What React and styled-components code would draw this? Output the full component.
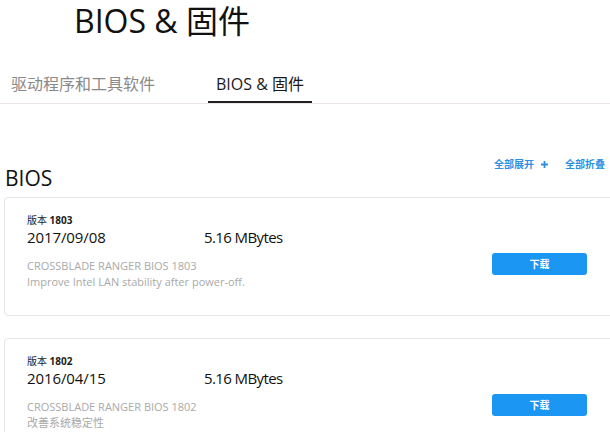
import React from "react";
import styled, { createGlobalStyle } from "styled-components";

const Global = createGlobalStyle`
  html, body { margin: 0; padding: 0; overflow: hidden; background: #fff; }
  body { font-family: "Open Sans", "Noto Sans CJK SC", sans-serif; color: #1a1a1a; }
`;

const Page = styled.div`
  width: 610px;
  height: 432px;
  overflow: hidden;
`;

const Title = styled.h1`
  margin: 0;
  padding-left: 74px;
  font-size: 32px;
  font-weight: 400;
  line-height: 42px;
  color: #111;
`;

const Tabs = styled.div`
  display: flex;
  gap: 45px;
  margin-top: 30px;
  padding-left: 3px;
  border-bottom: 1px solid #efe8ea;
`;

const Tab = styled.div`
  padding: 0 8px 5px;
  font-size: 16px;
  line-height: 24px;
  color: ${(p) => (p.$active ? "#1a1a1a" : "#8a8a8a")};
  border-bottom: 2px solid ${(p) => (p.$active ? "#222" : "transparent")};
`;

const Section = styled.div`
  width: 640px;
  margin-left: 4px;
`;

const SectionHead = styled.div`
  display: flex;
  justify-content: space-between;
  align-items: flex-start;
  margin-top: 53px;
  padding-right: 25px;
`;

const Heading = styled.h2`
  margin: 8px 0 0 1px;
  font-size: 21px;
  font-weight: 400;
  line-height: 26px;
  color: #111;
`;

const Actions = styled.div`
  display: flex;
  gap: 17px;
`;

const Action = styled.span`
  display: inline-flex;
  align-items: center;
  gap: 7px;
  font-size: 10px;
  font-weight: 700;
  line-height: 14px;
  color: #2b90e4;
`;

const Cards = styled.div`
  display: flex;
  flex-direction: column;
  gap: 22px;
  margin-top: 6px;
`;

const Card = styled.div`
  display: flex;
  align-items: flex-start;
  height: 117px;
  border: 1px solid #e6e6e6;
  border-radius: 4px;
  padding-left: 22px;
`;

const Info = styled.div`
  flex: 1;
  padding-top: 15px;
`;

const Version = styled.div`
  font-size: 10px;
  line-height: 14px;
  color: #222;
  b { font-weight: 700; }
`;

const MetaRow = styled.div`
  display: grid;
  grid-template-columns: 177px auto;
  font-size: 15px;
  line-height: 20px;
  color: #111;
  letter-spacing: -0.1px;
`;

const Size = styled.span`
  letter-spacing: -0.6px;
`;

const Desc = styled.div`
  margin-top: 11px;
  font-size: 11px;
  line-height: 16px;
  color: #a9a9a9;
`;

const Button = styled.button`
  margin: 55px 56px 0 0;
  width: 95px;
  height: 22px;
  border: none;
  border-radius: 3px;
  background: #1b96f3;
  color: #fff;
  font-family: inherit;
  font-size: 10px;
  font-weight: 700;
  line-height: 22px;
  padding: 0;
`;

const Plus = () => (
  <svg width="7" height="7" viewBox="0 0 7 7">
    <path d="M3.5 0v7M0 3.5h7" stroke="#2b90e4" strokeWidth="1.8" />
  </svg>
);

const items = [
  {
    ver: "1803",
    date: "2017/09/08",
    size: "5.16 MBytes",
    name: "CROSSBLADE RANGER BIOS 1803",
    note: "Improve Intel LAN stability after power-off.",
  },
  {
    ver: "1802",
    date: "2016/04/15",
    size: "5.16 MBytes",
    name: "CROSSBLADE RANGER BIOS 1802",
    note: "改善系统稳定性",
  },
];

export default function App() {
  return (
    <Page>
      <Global />
      <Title>BIOS &amp; 固件</Title>
      <Tabs>
        <Tab>驱动程序和工具软件</Tab>
        <Tab $active>BIOS &amp; 固件</Tab>
      </Tabs>
      <Section>
        <SectionHead>
          <Heading>BIOS</Heading>
          <Actions>
            <Action>
              全部展开 <Plus />
            </Action>
            <Action>
              全部折叠 <Plus />
            </Action>
          </Actions>
        </SectionHead>
        <Cards>
          {items.map((it) => (
            <Card key={it.ver}>
              <Info>
                <Version>
                  版本 <b>{it.ver}</b>
                </Version>
                <MetaRow>
                  <span>{it.date}</span>
                  <Size>{it.size}</Size>
                </MetaRow>
                <Desc>
                  <div>{it.name}</div>
                  <div>{it.note}</div>
                </Desc>
              </Info>
              <Button>下载</Button>
            </Card>
          ))}
        </Cards>
      </Section>
    </Page>
  );
}
